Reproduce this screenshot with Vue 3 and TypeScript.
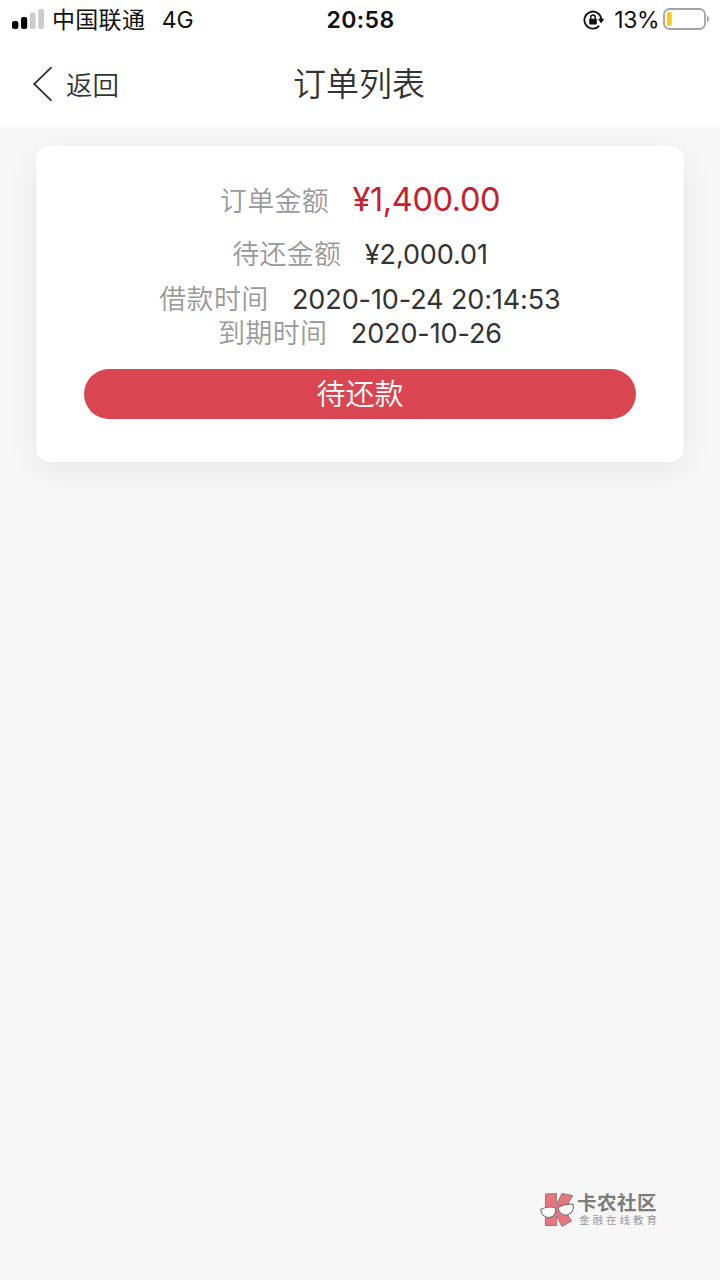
<script setup lang="ts">
interface OrderRow {
  label: string
  value: string
  kind: string
}

const rows: OrderRow[] = [
  { label: '订单金额', value: '¥1,400.00', kind: 'total' },
  { label: '待还金额', value: '¥2,000.01', kind: 'due' },
  { label: '借款时间', value: '2020-10-24 20:14:53', kind: 'start' },
  { label: '到期时间', value: '2020-10-26', kind: 'end' },
]
</script>

<template>
  <div class="screen">
    <header class="status">
      <div class="side">
        <svg class="signal" width="32" height="20" viewBox="0 0 32 20">
          <rect x="0" y="12" width="6.4" height="8" rx="2" fill="#000" />
          <rect x="9" y="8" width="6.2" height="12" rx="2" fill="#000" />
          <rect x="17.8" y="3.5" width="5.8" height="16.5" rx="2" fill="#ccc" />
          <rect x="26.2" y="0" width="5.8" height="20" rx="2" fill="#ccc" />
        </svg>
        <span class="carrier">中国联通</span>
        <span class="network">4G</span>
      </div>
      <span class="clock">20:58</span>
      <div class="side right">
        <svg class="lock" width="22" height="20" viewBox="0 0 22 20">
          <path d="M16.2 15.8A8.5 8.5 0 1 1 18.4 9.3" fill="none" stroke="#111" stroke-width="1.8" />
          <path d="M14.8 8.8h6.6l-3.3 4.6z" fill="#111" />
          <rect x="6.2" y="8.8" width="7.6" height="5.8" rx="0.8" fill="#111" />
          <path d="M7.7 9.2V7.3a2.3 2.3 0 0 1 4.6 0v1.9" fill="none" stroke="#111" stroke-width="1.4" />
        </svg>
        <span class="percent">13%</span>
        <svg class="battery" width="47" height="22" viewBox="0 0 47 22">
          <rect x="1" y="1" width="41" height="20" rx="5.5" fill="#fff" stroke="#a3a3a3" stroke-width="1.8" />
          <rect x="3.8" y="4" width="5" height="14" rx="2.3" fill="#f8cc1c" />
          <path d="M44 7.8c2.8 1 2.8 5.4 0 6.4z" fill="#a3a3a3" />
        </svg>
      </div>
    </header>

    <nav class="bar">
      <a class="back">
        <svg width="20" height="36" viewBox="0 0 20 36">
          <path d="M19.6 1.2L2.2 18l17.4 16.8" fill="none" stroke="#333" stroke-width="1.8" />
        </svg>
        <span>返回</span>
      </a>
      <h1>订单列表</h1>
      <span class="spacer"></span>
    </nav>

    <main>
      <section class="card">
        <div v-for="row in rows" :key="row.label" class="row" :class="row.kind">
          <span class="label">{{ row.label }}</span>
          <span class="value">{{ row.value }}</span>
        </div>
        <button class="pay" type="button"><span>待还款</span></button>
      </section>
    </main>

    <footer class="brand">
      <svg width="36" height="36" viewBox="0 0 36 36">
        <path
          d="M5.5 2L16.5 1.5 16.3 13 22 1.5 32.8 3.5 24.5 18 31.5 29 22 34.5 16.5 24 16.8 33.5H5.5z"
          fill="#e8757e"
          stroke="#8f7d7e"
          stroke-width="1"
        />
        <g fill="#fafafa" stroke="#777" stroke-width="1.1">
          <path d="M0.8 17.2C4.5 15.4 11 14.6 15.2 15.8 17.2 21 13.8 25.4 9 25.6 4.4 25.8 0.8 22.4 0.8 17.2z" />
          <path d="M18.2 15.2C22 13 28 11.8 33.2 12.3 34.4 18 31.6 22.4 27 23 22.5 23.6 18.4 20.6 18.2 15.2z" />
        </g>
      </svg>
      <div class="words">
        <strong>卡农社区</strong>
        <small>金融在线教育</small>
      </div>
    </footer>
  </div>
</template>

<style>
body {
  margin: 0;
  background: #f7f7f7;
}
</style>

<style scoped>
.screen {
  width: 720px;
  height: 1280px;
  display: flex;
  flex-direction: column;
  overflow: hidden;
  background: #f7f7f7;
  color: #333;
  font-family: Inter, "Noto Sans CJK SC", sans-serif;
}

.status {
  height: 40px;
  display: grid;
  grid-template-columns: 1fr auto 1fr;
  align-items: center;
  padding: 0 10px 0 12px;
  background: #fff;
  color: #111;
  font-size: 23px;
  line-height: 40px;
}

.side {
  display: flex;
  align-items: center;
}

.right {
  justify-content: flex-end;
}

.signal {
  margin-bottom: 2px;
}

.carrier {
  margin-left: 8px;
  letter-spacing: 0.3px;
}

.network {
  margin-left: 16.5px;
}

.clock {
  margin-right: 1px;
  font-weight: 600;
  letter-spacing: 0.4px;
}

.percent {
  margin: 0 4px 0 9px;
  letter-spacing: -0.5px;
}

.battery {
  margin-bottom: 3px;
}

.bar {
  height: 87px;
  display: grid;
  grid-template-columns: 1fr auto 1fr;
  align-items: center;
  padding: 0 32px;
  box-sizing: border-box;
  background: #fff;
}

.back {
  display: flex;
  align-items: center;
  gap: 14px;
  font-size: 26.5px;
  font-weight: 350;
}

h1 {
  margin: 0 2px 0 0;
  font-size: 33px;
  font-weight: 350;
  line-height: 48px;
}

main {
  flex: 1;
  padding: 19px 36px 0;
}

.card {
  height: 316px;
  box-sizing: border-box;
  padding: 26px 48px 0;
  border-radius: 14px;
  background: #fff;
  box-shadow: 0 8px 30px rgba(0, 0, 0, 0.07);
  display: flex;
  flex-direction: column;
}

.row {
  height: 34px;
  display: flex;
  justify-content: center;
  align-items: baseline;
  gap: 23.5px;
  font-size: 27px;
  line-height: 36px;
  white-space: nowrap;
}

.label {
  color: #999;
  font-weight: 350;
  letter-spacing: 0.3px;
}

.value {
  letter-spacing: -0.1px;
}

.total {
  height: 54px;
  line-height: 56px;
}

.total .value {
  color: #c6202e;
  font-size: 32.5px;
  letter-spacing: -0.4px;
}

.due {
  height: 56px;
  line-height: 58px;
}

.pay {
  height: 50px;
  margin-top: 19px;
  padding: 2px 0 0;
  border: 0;
  border-radius: 25px;
  background: #da4552;
  color: #fff;
  font-family: inherit;
  font-size: 29px;
  font-weight: 350;
  line-height: 48px;
}

.brand {
  display: flex;
  align-items: center;
  gap: 1px;
  margin: 0 0 52px 540px;
  color: #7c7c7c;
}

.words {
  display: flex;
  flex-direction: column;
}

.words strong {
  font-size: 19.5px;
  font-weight: 700;
  line-height: 21px;
  letter-spacing: 0.5px;
}

.words small {
  margin-left: 2px;
  font-size: 10.5px;
  line-height: 13px;
  letter-spacing: 3px;
  color: #999;
}
</style>
